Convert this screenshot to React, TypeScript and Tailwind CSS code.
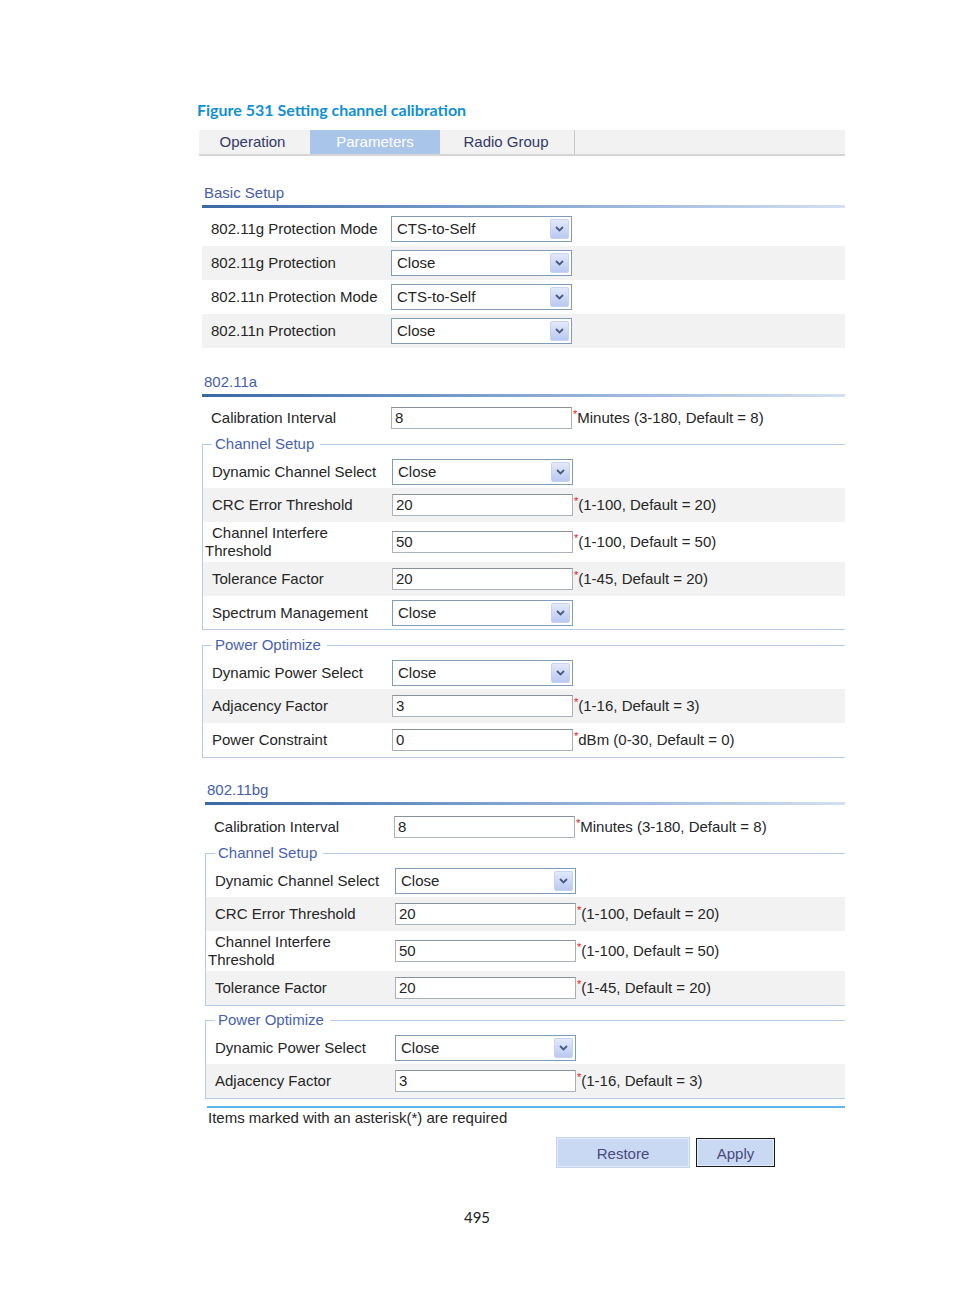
import clsx from "clsx";

type Field = {
  label: string;
  value: string;
  kind: "select" | "input";
  hint?: string;
  h: string;
};

function Chevron() {
  return (
    <svg width="9" height="6" viewBox="0 0 9 6">
      <path d="M1 1l3.5 3.5L8 1" stroke="#4b5a7e" strokeWidth="1.8" fill="none" />
    </svg>
  );
}

function SelectBox({ value }: { value: string }) {
  return (
    <div className="flex h-[26px] w-[181px] items-center justify-between border border-[#7f9db9] bg-white pl-[5px] pr-[2px]">
      <span className="pt-[1px]">{value}</span>
      <div className="flex h-[20px] w-[19px] items-center justify-center rounded-[2px] border border-[#c6d2f0] bg-linear-to-b from-[#e3e9fb] to-[#bac9f1]">
        <Chevron />
      </div>
    </div>
  );
}

function TextBox({ value }: { value: string }) {
  return (
    <div className="h-[22px] w-[181px] border border-[#abb1b8] border-t-[#8c9299] bg-white pl-[3px] leading-[20px]">
      {value}
    </div>
  );
}

function Row({ f, shade }: { f: Field; shade: boolean }) {
  return (
    <div className={clsx("flex items-center", f.h, shade ? "bg-[#f2f2f2]" : "bg-white")}>
      <div className="w-[189px] shrink-0 pl-[2px] indent-[7px] leading-[18px]">{f.label}</div>
      {f.kind === "select" ? <SelectBox value={f.value} /> : <TextBox value={f.value} />}
      {f.hint && (
        <div className="flex items-start pl-[1px]">
          <span className="mt-[1px] text-[11px] leading-[12px] text-[#ee1111]">*</span>
          <span>{f.hint}</span>
        </div>
      )}
    </div>
  );
}

function Rows({ fields }: { fields: Field[] }) {
  return (
    <>
      {fields.map((f, i) => (
        <Row key={f.label} f={f} shade={i % 2 === 1} />
      ))}
    </>
  );
}

function SectionHead({ title, className }: { title: string; className: string }) {
  return (
    <div className={className}>
      <div className="h-[20px] pl-[5px] leading-[20px] text-[#4660a8]">{title}</div>
      <div className="ml-[3px] mt-[2px] h-[3px] bg-linear-to-r from-[#3a68a6] via-[#86a7d2] to-[#d3e0f1]" />
    </div>
  );
}

function Group({ legend, fields, className }: { legend: string; fields: Field[]; className: string }) {
  return (
    <fieldset className={clsx("ml-[3px] border border-r-0 border-[#b6cbe8] pt-[2px]", className)}>
      <legend className="ml-[9px] pl-[3px] pr-[6px] leading-[18px] text-[#4862b0]">{legend}</legend>
      <Rows fields={fields} />
    </fieldset>
  );
}

const basic: Field[] = [
  { label: "802.11g Protection Mode", value: "CTS-to-Self", kind: "select", h: "h-[34px]" },
  { label: "802.11g Protection", value: "Close", kind: "select", h: "h-[34px]" },
  { label: "802.11n Protection Mode", value: "CTS-to-Self", kind: "select", h: "h-[34px]" },
  { label: "802.11n Protection", value: "Close", kind: "select", h: "h-[34px]" },
];

const calib: Field = {
  label: "Calibration Interval",
  value: "8",
  kind: "input",
  hint: "Minutes (3-180, Default = 8)",
  h: "h-[34px]",
};

const channelA: Field[] = [
  { label: "Dynamic Channel Select", value: "Close", kind: "select", h: "h-[33px]" },
  { label: "CRC Error Threshold", value: "20", kind: "input", hint: "(1-100, Default = 20)", h: "h-[34px]" },
  { label: "Channel Interfere Threshold", value: "50", kind: "input", hint: "(1-100, Default = 50)", h: "h-[40px]" },
  { label: "Tolerance Factor", value: "20", kind: "input", hint: "(1-45, Default = 20)", h: "h-[34px]" },
  { label: "Spectrum Management", value: "Close", kind: "select", h: "h-[33px]" },
];

const powerA: Field[] = [
  { label: "Dynamic Power Select", value: "Close", kind: "select", h: "h-[33px]" },
  { label: "Adjacency Factor", value: "3", kind: "input", hint: "(1-16, Default = 3)", h: "h-[34px]" },
  { label: "Power Constraint", value: "0", kind: "input", hint: "dBm (0-30, Default = 0)", h: "h-[34px]" },
];

const channelBG = channelA.slice(0, 4);
const powerBG = powerA.slice(0, 2);

export default function App() {
  return (
    <div className="min-h-[1296px] bg-white pt-[100px] font-['Liberation_Sans',Arial,sans-serif] text-[15px] text-[#262626]">
      <div className="ml-[199px] w-[646px]">
        <div className="-ml-[2px] h-[20px] font-['Lato',sans-serif] text-[16px] font-bold leading-[20px] text-[#1190d4]">
          Figure 531 Setting channel calibration
        </div>

        <div className="mt-[10px] flex h-[26px] border-b-2 border-[#d5d5d5] bg-[#f2f2f2] leading-[24px]">
          <div className="w-[111px] pr-[4px] text-center text-[#333a66]">Operation</div>
          <div className="w-[130px] bg-[#a9c5ea] text-center text-white">Parameters</div>
          <div className="w-[135px] border-r border-[#c8c8c8] pr-[2px] text-center text-[#333a66]">Radio Group</div>
        </div>

        <SectionHead title="Basic Setup" className="mt-[27px]" />
        <div className="ml-[3px] mt-[4px]">
          <Rows fields={basic} />
        </div>

        <SectionHead title="802.11a" className="mt-[24px]" />
        <div className="ml-[3px] mt-[4px]">
          <Row f={calib} shade={false} />
        </div>
        <Group legend="Channel Setup" fields={channelA} className="mt-0" />
        <Group legend="Power Optimize" fields={powerA} className="mt-[6px]" />

        <div className="ml-[3px]">
          <SectionHead title="802.11bg" className="mt-[22px]" />
          <div className="ml-[3px] mt-[5px]">
            <Row f={calib} shade={false} />
          </div>
          <Group legend="Channel Setup" fields={channelBG} className="mt-0" />
          <Group legend="Power Optimize" fields={powerBG} className="mt-[5px]" />
        </div>

        <div className="ml-[8px] mt-[7px] h-[2px] bg-[#5cb6ec]" />
        <div className="mt-[1px] pl-[9px] leading-[18px]">Items marked with an asterisk(*) are required</div>

        <div className="mt-[11px] flex gap-[7px] pl-[358px]">
          <button className="h-[29px] w-[132px] border border-[#e3ebfa] bg-[#c9d9f3] pt-[3px] text-[#4a4a80] shadow-[0_0_0_1px_#c2d3ef]">
            Restore
          </button>
          <button className="h-[29px] w-[79px] border border-[#1a1a1a] bg-[#c9d9f3] pt-[3px] text-[#4a4a80] shadow-[inset_0_0_0_1px_#e3ebfa]">
            Apply
          </button>
        </div>
      </div>

      <div className="mt-[41px] text-center font-['Lato',sans-serif] text-[15px] leading-[18px] text-[#222]">495</div>
    </div>
  );
}
